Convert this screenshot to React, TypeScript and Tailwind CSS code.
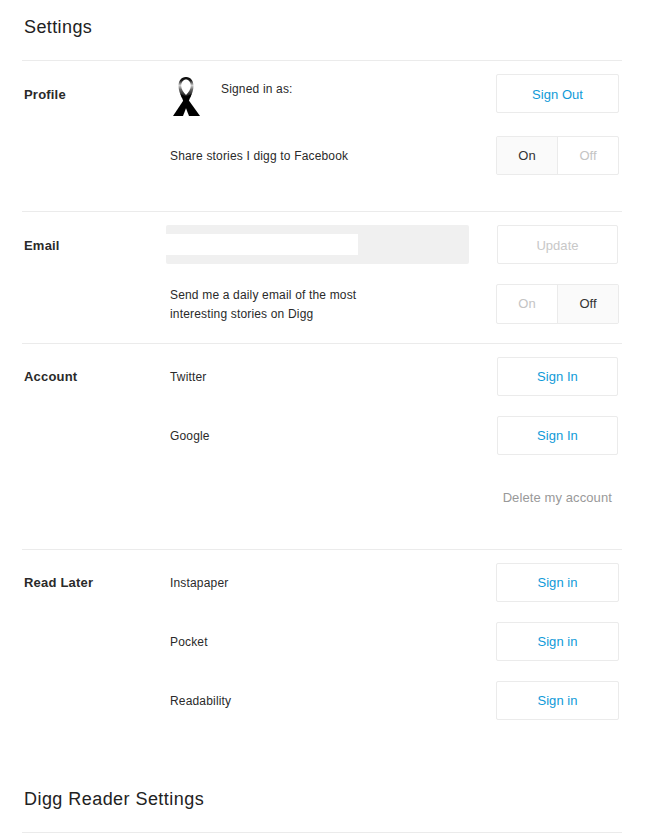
const BTN =
  "flex h-[39px] items-center justify-center rounded-[2px] border border-[#ebebeb] bg-white text-[13px] tracking-[0.05px]";

function ActionButton({
  label,
  narrow,
  muted,
  low,
}: {
  label: string;
  narrow?: boolean;
  muted?: boolean;
  low?: boolean;
}) {
  return (
    <button
      className={`${BTN} ${low ? "pt-[3px]" : "pt-px"} ${narrow ? "mr-px w-[121px]" : "w-[123px]"} ${muted ? "text-[#c8c8c8]" : "text-[#0f9ad8]"}`}
    >
      {label}
    </button>
  );
}

function Toggle({ active, tall }: { active: "On" | "Off"; tall?: boolean }) {
  return (
    <div
      className={`flex w-[123px] overflow-hidden rounded-[2px] border border-[#ebebeb] text-[13px] ${tall ? "h-[40px]" : "h-[39px]"}`}
    >
      <div
        className={`flex w-[61px] items-center justify-center border-r border-[#ebebeb] ${active === "On" ? "bg-[#fafafa] text-[#333333]" : "text-[#c4c4c4]"}`}
      >
        On
      </div>
      <div
        className={`flex flex-1 items-center justify-center ${active === "Off" ? "bg-[#fafafa] text-[#333333]" : "text-[#c4c4c4]"}`}
      >
        Off
      </div>
    </div>
  );
}

function Section({
  title,
  className,
  titleClass = "pt-[13px]",
  children,
}: {
  title: string;
  className: string;
  titleClass?: string;
  children: React.ReactNode;
}) {
  return (
    <section className={`flex border-t border-[#ebebeb] pt-[13px] pr-[3px] ${className}`}>
      <h3
        className={`w-[148px] shrink-0 pl-[2px] text-[13px] leading-[15px] font-bold tracking-[0.2px] text-[#2a2a2a] ${titleClass}`}
      >
        {title}
      </h3>
      <div className="flex-1">{children}</div>
    </section>
  );
}

function Row({ label, children }: { label: string; children: React.ReactNode }) {
  return (
    <div className="flex items-center justify-between">
      <span className="text-[12px] tracking-[0.17px] text-[#2a2a2a]">{label}</span>
      {children}
    </div>
  );
}

function Ribbon() {
  return (
    <svg width="30" height="42" viewBox="0 0 30 42" className="shrink-0">
      <defs>
        <linearGradient id="loop" x1="0" y1="0" x2="0" y2="1">
          <stop offset="0" stopColor="#000000" />
          <stop offset="0.18" stopColor="#222222" />
          <stop offset="0.4" stopColor="#d0d0d0" />
          <stop offset="0.6" stopColor="#666666" />
          <stop offset="1" stopColor="#000000" />
        </linearGradient>
      </defs>
      <path
        fillRule="evenodd"
        d="M15 2C10 2 7.5 6 7.5 11C7.5 15 9 19 11 23H19C21 19 22.5 15 22.5 11C22.5 6 20 2 15 2ZM15 4.5C17.5 4.5 19.8 7 19.8 11C19.8 14 17.5 17.5 15 20C12.5 17.5 10.2 14 10.2 11C10.2 7 12.5 4.5 15 4.5Z"
        fill="url(#loop)"
      />
      <path d="M9.5 19L15 21.5L29 41H18Z" fill="#000000" />
      <path d="M20.5 19L15 21.5L2 41H12Z" fill="#000000" />
    </svg>
  );
}

export default function App() {
  return (
    <div className="mx-[22px] h-[838px] w-[600px] overflow-hidden bg-white font-['Liberation_Sans',Arial,sans-serif]">
      <h1 className="pt-[17px] pb-[22px] pl-[2px] text-[18px] leading-[21px] tracking-[0.4px] text-[#222222]">
        Settings
      </h1>

      <Section title="Profile" className="h-[151px]">
        <div className="flex items-start justify-between">
          <div className="flex pt-[1px] pl-px">
            <Ribbon />
            <span className="ml-[20px] pt-[5px] text-[12px] tracking-[0.17px] text-[#2a2a2a]">Signed in as:</span>
          </div>
          <ActionButton label="Sign Out" low />
        </div>
        <div className="mt-[19px]">
          <Row label="Share stories I digg to Facebook">
            <Toggle active="On" />
          </Row>
        </div>
      </Section>

      <Section title="Email" className="h-[132px]">
        <div className="-ml-[4px] flex items-start justify-between">
          <div className="flex h-[39px] w-[303px] items-center rounded-[2px] bg-[#f0f0f0]">
            <div className="h-[21px] w-[192px] bg-white" />
          </div>
          <ActionButton label="Update" narrow muted low />
        </div>
        <div className="mt-[20px]">
          <div className="flex items-center justify-between">
            <p className="pt-[2px] text-[12px] leading-[19px] tracking-[0.17px] text-[#2a2a2a]">
              Send me a daily email of the most
              <br />
              interesting stories on Digg
            </p>
            <Toggle active="Off" tall />
          </div>
        </div>
      </Section>

      <Section title="Account" className="h-[206px]" titleClass="pt-[12px]">
        <Row label="Twitter">
          <ActionButton label="Sign In" narrow />
        </Row>
        <div className="mt-[20px]">
          <Row label="Google">
            <ActionButton label="Sign In" narrow />
          </Row>
        </div>
        <div className="mt-[35px] flex justify-end pr-[7px] text-[13px] leading-[15px] tracking-[0.1px] text-[#999999]">
          Delete my account
        </div>
      </Section>

      <Section title="Read Later" className="h-[206px]" titleClass="pt-[12px]">
        <Row label="Instapaper">
          <ActionButton label="Sign in" />
        </Row>
        <div className="mt-[20px]">
          <Row label="Pocket">
            <ActionButton label="Sign in" />
          </Row>
        </div>
        <div className="mt-[20px]">
          <Row label="Readability">
            <ActionButton label="Sign in" />
          </Row>
        </div>
      </Section>

      <h2 className="pt-[34px] pb-[22px] pl-[2px] text-[18px] leading-[21px] tracking-[0.45px] text-[#222222]">
        Digg Reader Settings
      </h2>
      <div className="border-t border-[#ebebeb]" />
    </div>
  );
}
